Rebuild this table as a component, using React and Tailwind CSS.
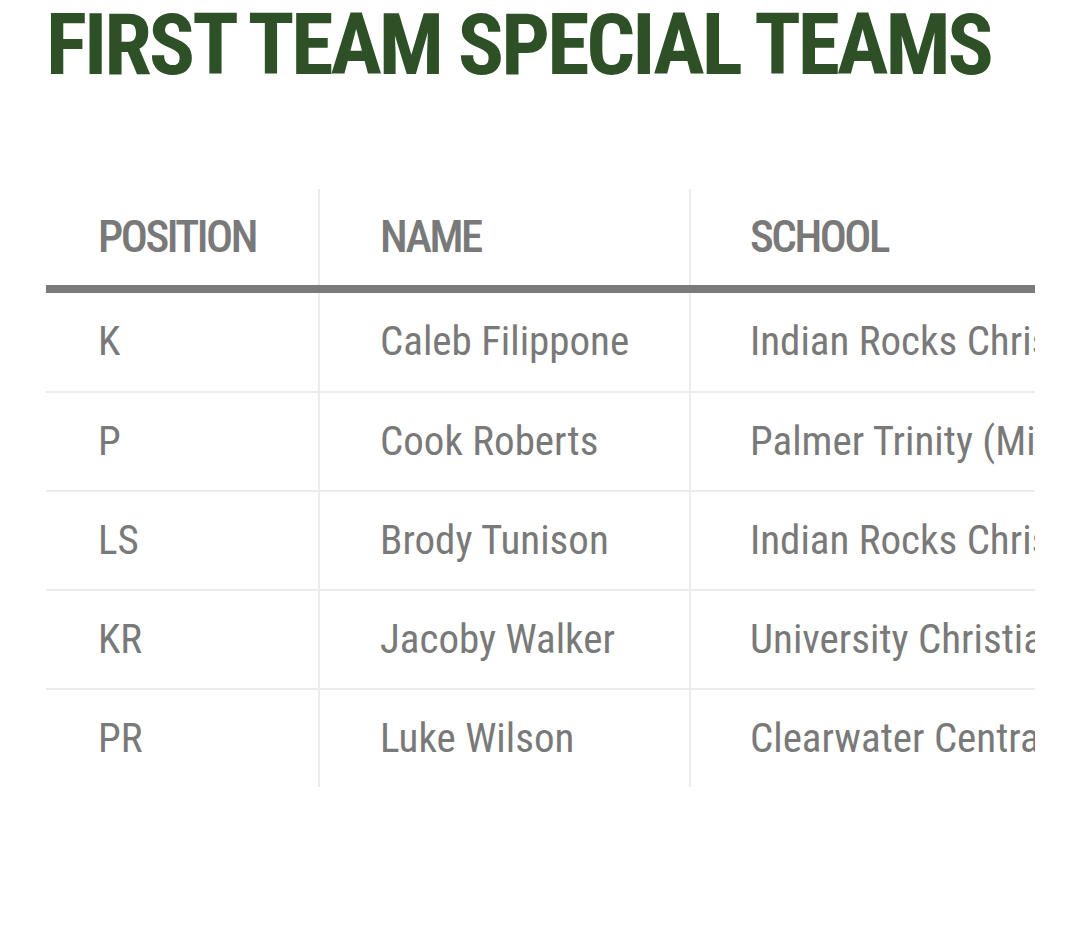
const rows = [
  { pos: "K", name: "Caleb Filippone", school: "Indian Rocks Christian" },
  { pos: "P", name: "Cook Roberts", school: "Palmer Trinity (Miami)" },
  { pos: "LS", name: "Brody Tunison", school: "Indian Rocks Christian" },
  { pos: "KR", name: "Jacoby Walker", school: "University Christian" },
  { pos: "PR", name: "Luke Wilson", school: "Clearwater Central Catholic" },
];

const font = { fontFamily: '"Roboto Condensed", Roboto, "Liberation Sans", sans-serif' };

export default function App() {
  return (
    <div className="w-[1080px] h-[935px] bg-white overflow-hidden" style={font}>
      <h1 className="pl-[46px] pt-[2px] text-[86px] leading-[86px] font-bold text-[#2e5027] font-stretch-condensed tracking-[-3px] whitespace-nowrap">
        FIRST TEAM SPECIAL TEAMS
      </h1>

      <div className="ml-[46px] mt-[101px] w-[989px] overflow-hidden">
        <table className="table-fixed w-[1343px] border-collapse whitespace-nowrap text-[#797979] font-stretch-condensed">
          <colgroup>
            <col className="w-[273px]" />
            <col className="w-[371px]" />
            <col className="w-[699px]" />
          </colgroup>
          <thead>
            <tr className="h-[96px]">
              <th className="pl-[52px] text-left text-[45px] font-medium tracking-[-2.5px] border-r-2 border-[#ececec]">POSITION</th>
              <th className="pl-[60px] text-left text-[45px] font-medium tracking-[-2.5px] border-r-2 border-[#ececec]">NAME</th>
              <th className="pl-[59px] text-left text-[45px] font-medium tracking-[-2.5px]">SCHOOL</th>
            </tr>
            <tr>
              <td colSpan={3} className="h-[8px] p-0 bg-[#7a7a7a]"></td>
            </tr>
          </thead>
          <tbody>
            {rows.map((r, i) => (
              <tr key={r.pos} className={i < rows.length - 1 ? "h-[99px] border-b-2 border-[#ececec]" : "h-[98px]"}>
                <td className="pl-[52px] text-[41px] border-r-2 border-[#ececec]">{r.pos}</td>
                <td className="pl-[60px] text-[41px] border-r-2 border-[#ececec]">{r.name}</td>
                <td className="pl-[59px] text-[41px]">{r.school}</td>
              </tr>
            ))}
          </tbody>
        </table>
      </div>
    </div>
  );
}
